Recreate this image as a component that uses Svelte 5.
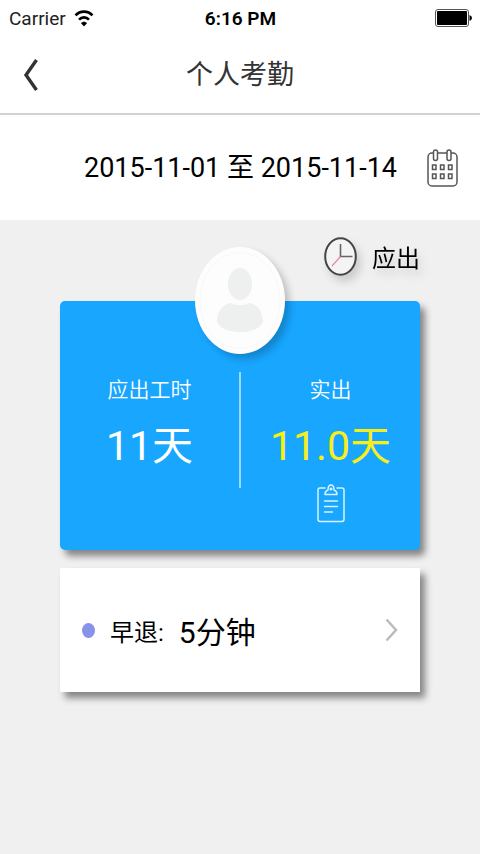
<script>
    let from = '2015-11-01';
    let to = '2015-11-14';
    let expectedDays = '11';
    let actualDays = '11.0';
    let earlyLeave = '5分钟';
</script>

<style>
    :global(body) {
        background-color: #f0f0f0;
    }
    .page {
        font-family: Roboto, "Noto Sans CJK SC", sans-serif;
        color: #000;
    }
    button {
        padding: 0;
        border: none;
        background: none;
        font: inherit;
        color: inherit;
        cursor: pointer;
    }
    svg {
        display: block;
    }
    .status-bar {
        display: grid;
        grid-template-columns: 1fr auto 1fr;
        align-items: center;
        height: 36px;
        padding: 0 8px 0 9px;
        background-color: #fff;
        font-size: 19px;
    }
    .carrier {
        display: flex;
        align-items: center;
        gap: 8px;
        color: #222;
    }
    .time {
        font-weight: 600;
    }
    .battery {
        justify-self: end;
    }
    .header {
        display: grid;
        grid-template-columns: 1fr auto 1fr;
        align-items: center;
        height: 77px;
        padding: 0 23px;
        border-bottom: 2px solid #d2d2d2;
        background-color: #fff;
    }
    .back {
        justify-self: start;
    }
    h1 {
        margin: 0;
        font-size: 27px;
        font-weight: 400;
        line-height: 40px;
        color: #333;
    }
    .date-row {
        display: flex;
        justify-content: flex-end;
        align-items: center;
        gap: 30px;
        height: 105px;
        padding: 0 22px;
        background-color: #fff;
        font-size: 27px;
        line-height: 36px;
    }
    .content {
        padding: 0 60px 40px;
    }
    .legend {
        display: flex;
        justify-content: flex-end;
        align-items: center;
        gap: 15px;
        height: 73px;
        padding-bottom: 8px;
        font-size: 24px;
        filter: drop-shadow(4px 6px 4px rgba(0, 0, 0, 0.15));
    }
    .summary {
        position: relative;
        display: grid;
        grid-template-columns: 1fr 2px 1fr;
        padding: 71px 0 27px;
        border-radius: 5px;
        background-color: #18a6ff;
        color: #fff;
        box-shadow: 5px 6px 7px rgba(0, 0, 0, 0.45);
    }
    .avatar {
        position: absolute;
        top: -54px;
        left: 50%;
        width: 90px;
        height: 107px;
        margin-left: -45px;
        border-radius: 50%;
        background-color: #fdfdfd;
        box-shadow: 5px 5px 7px rgba(0, 0, 0, 0.2);
    }
    .divider {
        height: 116px;
        background-color: #9ddafe;
    }
    .column {
        display: flex;
        flex-direction: column;
        align-items: center;
    }
    .label {
        font-size: 21px;
        font-weight: 350;
        line-height: 36px;
    }
    .value {
        font-size: 41px;
        line-height: 76px;
    }
    .actual {
        color: #f8ee18;
    }
    .record {
        display: flex;
        align-items: center;
        width: 100%;
        height: 124px;
        margin-top: 18px;
        padding: 0 22px;
        background-color: #fff;
        box-shadow: 5px 6px 7px rgba(0, 0, 0, 0.45);
    }
    .dot {
        width: 13px;
        height: 15px;
        margin-right: 15px;
        border-radius: 50%;
        background-color: #8792ea;
    }
    .record-name {
        margin-right: 15px;
        font-size: 24px;
    }
    .record-value {
        font-size: 30px;
    }
    .arrow {
        margin-left: auto;
    }
</style>

<div class="page">
    <div class="status-bar">
        <div class="carrier">
            <span>Carrier</span>
            <svg width="20" height="17" viewBox="0 0 20 17" fill="none" stroke="#000" stroke-width="2.6">
                <path d="M1.5 5.4 C6.2 0.4 13.8 0.4 18.5 5.4" />
                <path d="M5 9.6 C7.8 6.6 12.2 6.6 15 9.6" />
                <path d="M10 16.5 L7 13.2 C8.6 11.2 11.4 11.2 13 13.2 Z" fill="#000" stroke="none" />
            </svg>
        </div>
        <span class="time">6:16 PM</span>
        <svg class="battery" width="37" height="18" viewBox="0 0 37 18">
            <rect x="0.5" y="0.5" width="33" height="17" rx="2.5" fill="#fff" stroke="#555" />
            <rect x="2" y="2" width="30" height="14" rx="1" fill="#000" />
            <path d="M34.5 6 Q37 7 37 9 Q37 11 34.5 12 Z" fill="#000" />
        </svg>
    </div>

    <header class="header">
        <button class="back" aria-label="返回">
            <svg width="16" height="32" viewBox="0 0 16 32" fill="none" stroke="#333" stroke-width="3.4">
                <path d="M13.5 1 L3 16 L13.5 31" />
            </svg>
        </button>
        <h1>个人考勤</h1>
    </header>

    <div class="date-row">
        <span>{from} 至 {to}</span>
        <button aria-label="选择日期">
            <svg width="31" height="38" viewBox="0 0 31 38" fill="#fff" stroke="#555" stroke-width="1.5">
                <rect x="1" y="4" width="29" height="33" rx="4" />
                <rect x="6.5" y="1" width="4" height="10.5" rx="2" />
                <rect x="20" y="1" width="4" height="10.5" rx="2" />
                {#each [16, 25] as y}
                    {#each [5.5, 13.5, 21.5] as x}
                        <rect {x} {y} width="3.5" height="4.5" />
                    {/each}
                {/each}
            </svg>
        </button>
    </div>

    <main class="content">
        <div class="legend">
            <svg width="33" height="39" viewBox="0 0 33 39" fill="none">
                <ellipse cx="16.5" cy="19.5" rx="15.3" ry="18.2" fill="#f4f4f4" stroke="#444" stroke-width="2" />
                <path d="M16.5 7 V19.5 H28.5" stroke="#666" stroke-width="1.6" />
                <path d="M16.5 19.5 L8 29" stroke="#e58a94" stroke-width="1.2" />
            </svg>
            <span>应出</span>
        </div>

        <section class="summary">
            <svg class="avatar" viewBox="0 0 90 107">
                <ellipse cx="45" cy="53.5" rx="40" ry="48" fill="none" stroke="#f7f7f7" />
                <ellipse cx="45" cy="37" rx="12" ry="16" fill="#eeefef" />
                <path d="M22 75 C22 63 29 57 36 56 C42 59 48 59 54 56 C62 57 68 64 68 75 C65 81 58 85 45 85 C32 85 25 81 22 75 Z" fill="#eeefef" />
            </svg>
            <div class="column">
                <span class="label">应出工时</span>
                <span class="value">{expectedDays}天</span>
            </div>
            <div class="divider"></div>
            <div class="column">
                <span class="label">实出</span>
                <span class="value actual">{actualDays}天</span>
                <button aria-label="详情">
                    <svg width="28" height="39" viewBox="0 0 28 39" fill="none" stroke="#d8f3ff" stroke-width="1.5" stroke-linejoin="round" stroke-linecap="round">
                        <path d="M8 4 H3 Q1 4 1 6 V35 Q1 37.5 3 37.5 H25 Q27 37.5 27 35 V6 Q27 4 25 4 H20" />
                        <path d="M8 10.5 Q8 7 11 6 Q11 1 14 1 Q17 1 17 6 Q20 7 20 10.5 Z" />
                        <circle cx="14" cy="5" r="0.8" />
                        <path d="M7.5 17 H20.5 M7.5 22.5 H20.5 M7.5 28 H15.5" />
                    </svg>
                </button>
            </div>
        </section>

        <button class="record">
            <span class="dot"></span>
            <span class="record-name">早退:</span>
            <span class="record-value">{earlyLeave}</span>
            <svg class="arrow" width="13" height="24" viewBox="0 0 13 24" fill="none" stroke="#bbb" stroke-width="2.5">
                <path d="M1.5 1.5 L11 12 L1.5 22.5" />
            </svg>
        </button>
    </main>
</div>
